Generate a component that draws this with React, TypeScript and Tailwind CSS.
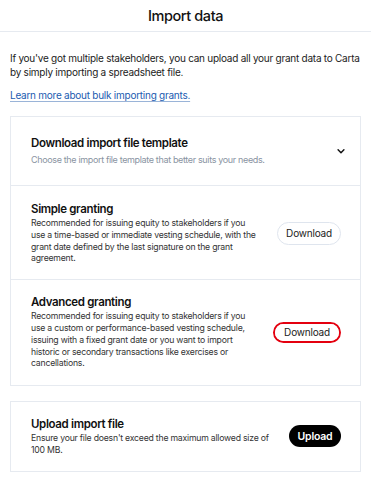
import React from "react";

function DownloadBtn({ focused }: { focused?: boolean }) {
  if (!focused)
    return (
      <button className="h-[23px] w-[64px] rounded-full border border-[#dfe5ee] bg-white text-[10px] tracking-[-0.2px] text-[#1b1b1b]">
        Download
      </button>
    );
  return (
    <div className="rounded-full border-2 border-[#e4000f] flex">
      <button className="h-[17px] w-[64px] rounded-full bg-white text-[10px] tracking-[-0.2px] text-[#1b1b1b]">
        Download
      </button>
    </div>
  );
}

function Section({
  title,
  desc,
  action,
  className = "",
}: {
  title: string;
  desc: string;
  action: React.ReactNode;
  className?: string;
}) {
  return (
    <div className={"flex items-center gap-[18px] pl-[20px] pr-[19px] " + className}>
      <div className="flex-1">
        <div className="text-[11.5px] leading-[16px] font-semibold tracking-[-0.35px] text-[#111]">{title}</div>
        <p className="mt-[1px] text-[8.7px] leading-[11.8px] tracking-[-0.22px] text-[#333]">{desc}</p>
      </div>
      <div className="shrink-0 flex">{action}</div>
    </div>
  );
}

export default function App() {
  return (
    <div className="w-[371px] h-[478px] bg-white overflow-hidden" style={{ fontFamily: "Inter, 'Noto Sans', sans-serif" }}>
      <div className="h-[32px] border-b border-[#e6eaf0] flex items-center justify-center">
        <h1 className="text-[14.5px] font-medium text-[#111] tracking-[-0.4px]">Import data</h1>
      </div>
      <div className="px-[10px]">
        <p className="mt-[19px] text-[10px] leading-[14px] tracking-[-0.25px] text-[#222]">
          If you've got multiple stakeholders, you can upload all your grant data to Carta by simply importing a spreadsheet file.
        </p>
        <a className="block mt-[9px] text-[10px] leading-[14px] tracking-[-0.25px] text-[#1a5bb0] underline underline-offset-2 decoration-[#9ab4d8]">
          Learn more about bulk importing grants.
        </a>
        <div className="mt-[14px] border border-[#e6eaf0]">
          <div className="flex items-center pl-[20px] pr-[14px] pt-[18px] pb-[19px] border-b border-[#e6eaf0]">
            <div className="flex-1">
              <div className="text-[11.5px] leading-[16px] font-semibold tracking-[-0.35px] text-[#111]">Download import file template</div>
              <div className="mt-[3px] text-[9px] leading-[12px] tracking-[-0.35px] text-[#8a94a2]">
                Choose the import file template that better suits your needs.
              </div>
            </div>
            <svg width="10" height="10" viewBox="0 0 24 24" fill="none" stroke="#111" strokeWidth="3.5" strokeLinecap="round" strokeLinejoin="round">
              <path d="M5 9l7 7 7-7" />
            </svg>
          </div>
          <Section
            className="pt-[15px] pb-[14px] border-b border-[#e6eaf0]"
            title="Simple granting"
            desc="Recommended for issuing equity to stakeholders if you use a time-based or immediate vesting schedule, with the grant date defined by the last signature on the grant agreement."
            action={<DownloadBtn />}
          />
          <Section
            className="pt-[14px] pb-[15px] pr-[17px] gap-[16px]"
            title="Advanced granting"
            desc="Recommended for issuing equity to stakeholders if you use a custom or performance-based vesting schedule, issuing with a fixed grant date or you want to import historic or secondary transactions like exercises or cancellations."
            action={<DownloadBtn focused />}
          />
        </div>
        <div className="mt-[15px] border border-[#e6eaf0]">
          <Section
            className="pt-[14px] pb-[14px]"
            title="Upload import file"
            desc="Ensure your file doesn't exceed the maximum allowed size of 100 MB."
            action={
              <button className="h-[22px] w-[52px] rounded-full bg-black text-white text-[10.5px] font-semibold tracking-[-0.2px]">
                Upload
              </button>
            }
          />
        </div>
      </div>
    </div>
  );
}
